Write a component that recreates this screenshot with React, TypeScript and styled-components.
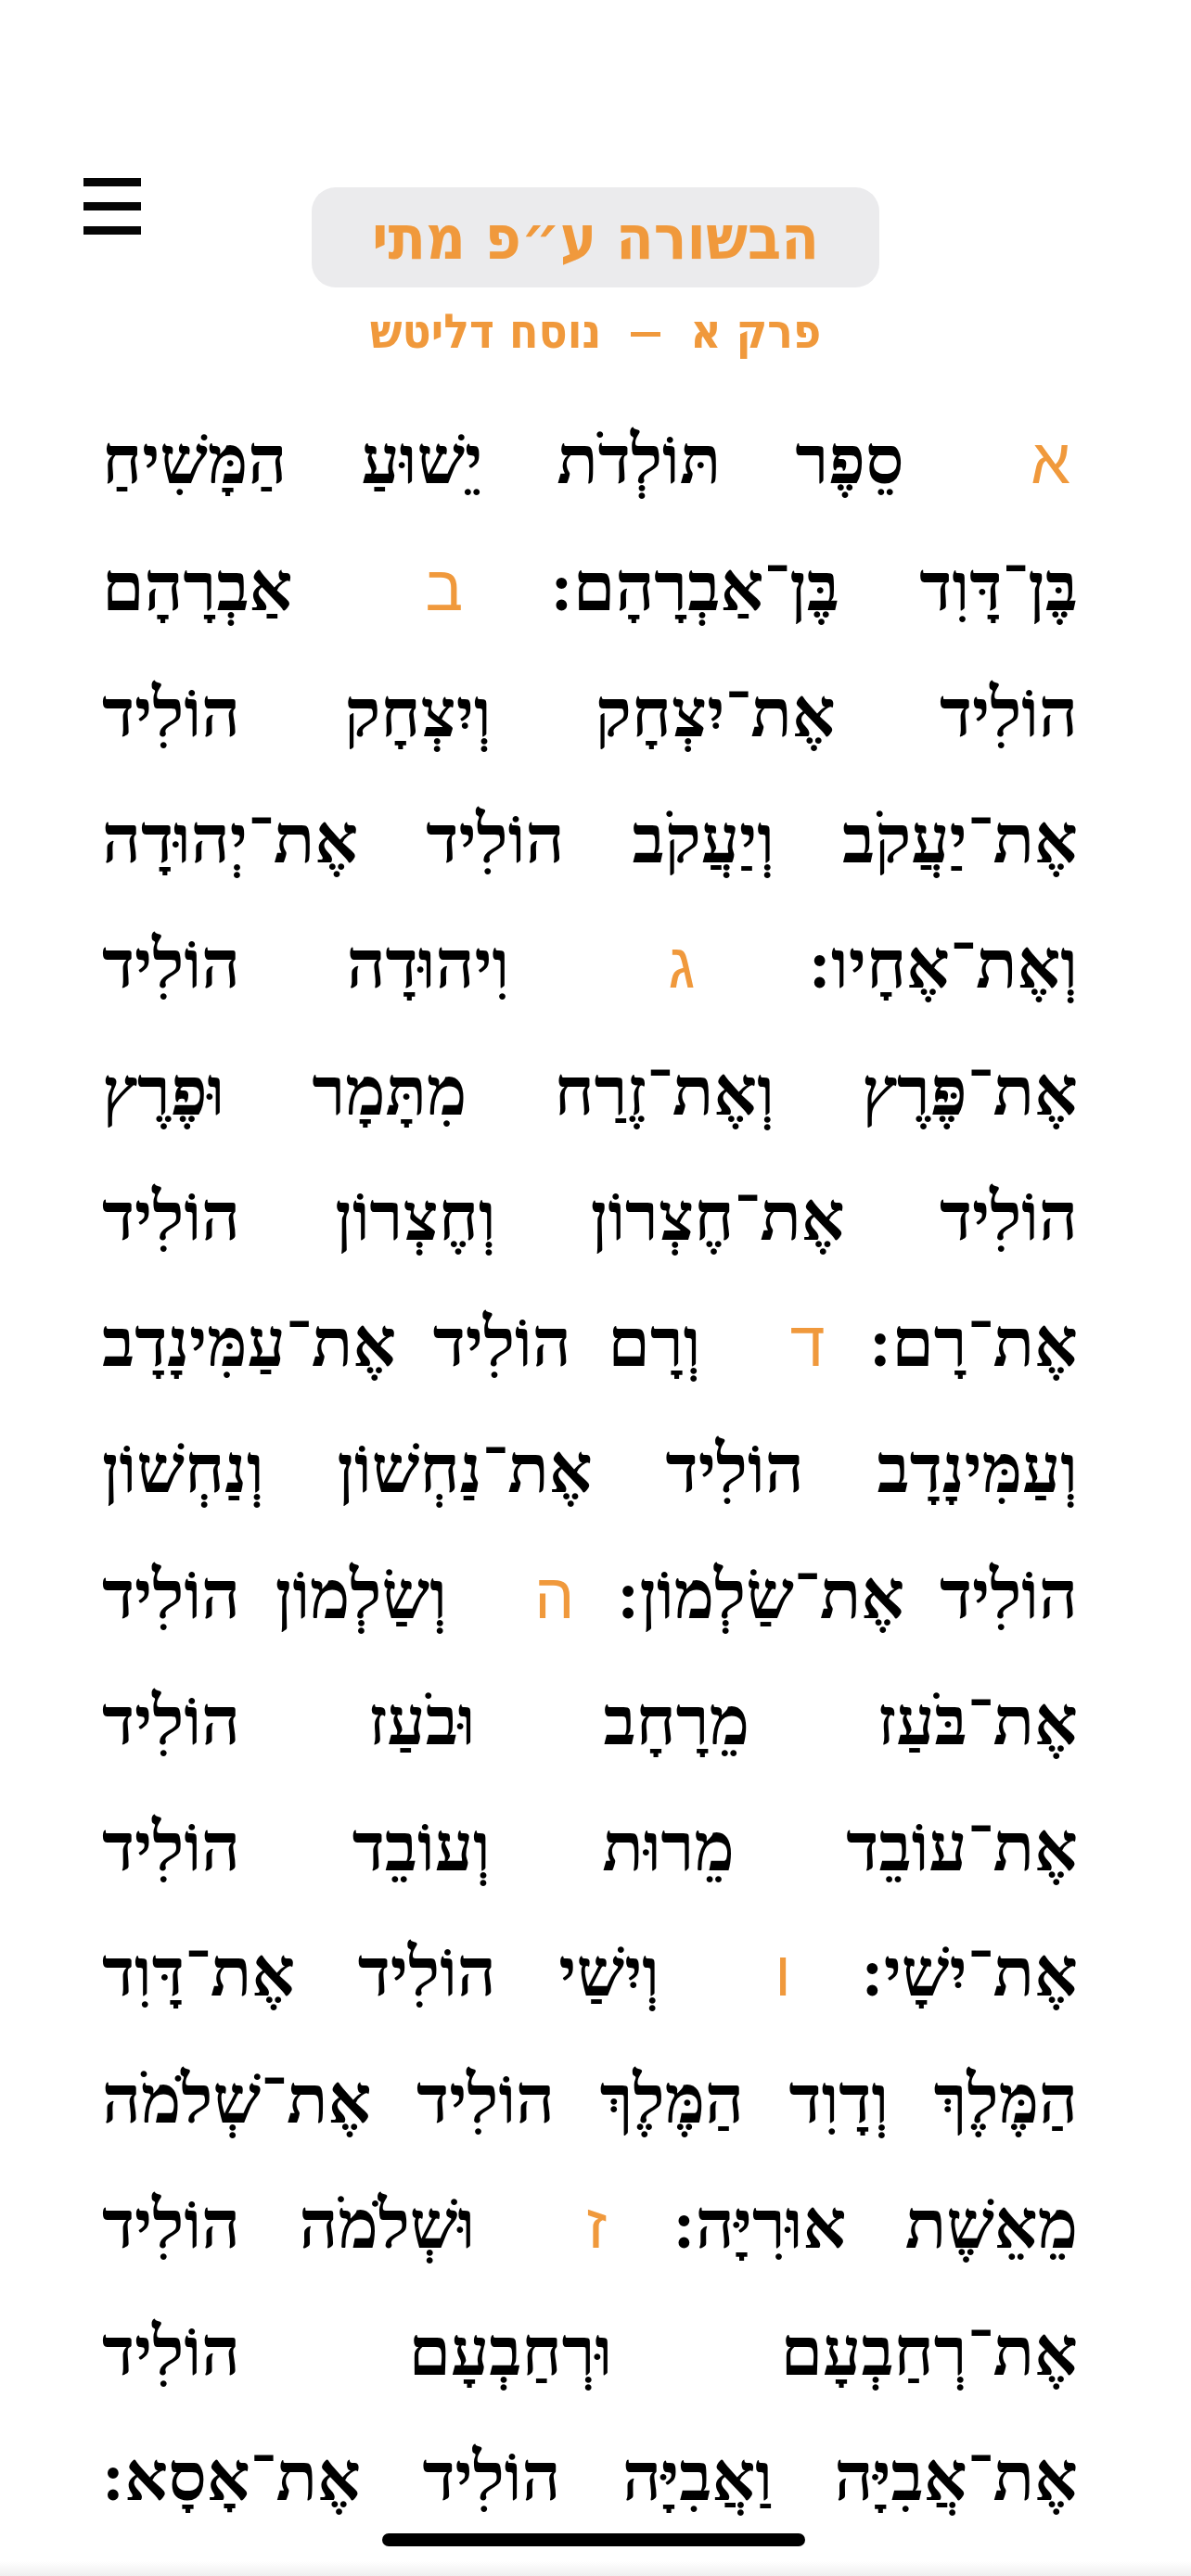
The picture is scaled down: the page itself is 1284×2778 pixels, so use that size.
import styled, { createGlobalStyle } from "styled-components";

const GlobalStyle = createGlobalStyle`
  html, body {
    margin: 0;
    padding: 0;
    background: #ffffff;
  }
  * {
    box-sizing: border-box;
  }
`;

const ORANGE = "#f0993c";

type Piece = string | { verse: string };

const lines: Piece[][] = [
  [{ verse: "א" }, "סֵפֶר תּוֹלְדֹת יֵשׁוּעַ הַמָּשִׁיחַ"],
  ["בֶּן־דָּוִד בֶּן־אַבְרָהָם:", { verse: "ב" }, "אַבְרָהָם"],
  ["הוֹלִיד אֶת־יִצְחָק וְיִצְחָק הוֹלִיד"],
  ["אֶת־יַעֲקֹב וְיַעֲקֹב הוֹלִיד אֶת־יְהוּדָה"],
  ["וְאֶת־אֶחָיו:", { verse: "ג" }, "וִיהוּדָה הוֹלִיד"],
  ["אֶת־פֶּרֶץ וְאֶת־זֶרַח מִתָּמָר וּפֶרֶץ"],
  ["הוֹלִיד אֶת־חֶצְרוֹן וְחֶצְרוֹן הוֹלִיד"],
  ["אֶת־רָם:", { verse: "ד" }, "וְרָם הוֹלִיד אֶת־עַמִּינָדָב"],
  ["וְעַמִּינָדָב הוֹלִיד אֶת־נַחְשׁוֹן וְנַחְשׁוֹן"],
  ["הוֹלִיד אֶת־שַׂלְמוֹן:", { verse: "ה" }, "וְשַׂלְמוֹן הוֹלִיד"],
  ["אֶת־בֹּעַז מֵרָחָב וּבֹעַז הוֹלִיד"],
  ["אֶת־עוֹבֵד מֵרוּת וְעוֹבֵד הוֹלִיד"],
  ["אֶת־יִשָׁי:", { verse: "ו" }, "וְיִשַׁי הוֹלִיד אֶת־דָּוִד"],
  ["הַמֶּלֶךְ וְדָוִד הַמֶּלֶךְ הוֹלִיד אֶת־שְׁלֹמֹה"],
  ["מֵאֵשֶׁת אוּרִיָּה:", { verse: "ז" }, "וּשְׁלֹמֹה הוֹלִיד"],
  ["אֶת־רְחַבְעָם וּרְחַבְעָם הוֹלִיד"],
  ["אֶת־אֲבִיָּה וַאֲבִיָּה הוֹלִיד אֶת־אָסָא:"],
];

const App = () => {
  return (
    <>
      <GlobalStyle />
      <Page>
        <Header>
          <MenuButton aria-label="menu">
            <MenuBar />
            <MenuBar />
            <MenuBar />
          </MenuButton>
          <TitleBlock>
            <TitlePill>הבשורה ע״פ מתי</TitlePill>
            <Subtitle>
              <span>פרק א</span>
              <Dash />
              <span>נוסח דליטש</span>
            </Subtitle>
          </TitleBlock>
          <div />
        </Header>

        <Chapter dir="rtl">
          {lines.map((line, i) => (
            <Line key={i}>
              {line.map((piece, j) =>
                typeof piece === "string" ? (
                  <span key={j}>{piece} </span>
                ) : (
                  <Verse key={j}>{piece.verse} </Verse>
                )
              )}
            </Line>
          ))}
        </Chapter>

        <BottomFade />
        <HomeIndicator />
      </Page>
    </>
  );
};

const Page = styled.div`
  position: relative;
  width: 1284px;
  min-height: 2778px;
  overflow: hidden;
  padding-top: 192px;
  background: #ffffff;
`;

const Header = styled.header`
  display: grid;
  grid-template-columns: 1fr auto 1fr;
  align-items: start;
`;

const MenuButton = styled.button`
  justify-self: start;
  margin-left: 90px;
  padding: 0;
  border: none;
  background: none;
  display: flex;
  flex-direction: column;
  gap: 17px;
  width: 62px;
`;

const MenuBar = styled.span`
  display: block;
  width: 62px;
  height: 9px;
  background: #050505;
`;

const TitleBlock = styled.div`
  display: flex;
  flex-direction: column;
  align-items: center;
  padding-top: 10px;
`;

const TitlePill = styled.h1`
  margin: 0;
  width: 612px;
  height: 108px;
  border-radius: 26px;
  background: #ebebed;
  color: ${ORANGE};
  display: flex;
  align-items: center;
  justify-content: center;
  font-family: "DejaVu Sans Condensed", "DejaVu Sans", sans-serif;
  font-weight: 700;
  font-size: 66px;
  direction: rtl;
`;

const Subtitle = styled.div`
  margin-top: 18px;
  direction: rtl;
  display: flex;
  align-items: center;
  gap: 32px;
  color: ${ORANGE};
  font-family: "DejaVu Sans Condensed", "DejaVu Sans", sans-serif;
  font-weight: 700;
  font-size: 51px;
  line-height: 60px;
`;

const Dash = styled.span`
  display: block;
  width: 32px;
  height: 5px;
  margin-top: 4px;
  background: ${ORANGE};
`;

const Chapter = styled.main`
  margin-top: 41px;
  padding: 0 122px 0 110px;
  font-family: "Liberation Serif", "DejaVu Serif", serif;
  font-weight: 700;
  font-size: 73px;
  line-height: 135.5px;
  color: #000000;
`;

const Line = styled.div`
  text-align: justify;
  text-align-last: justify;
  white-space: nowrap;
`;

const Verse = styled.span`
  color: ${ORANGE};
  font-family: "Liberation Sans", "DejaVu Sans", sans-serif;
  font-weight: 400;
  font-size: 68px;
  margin-left: 56px;
  margin-right: 8px;
`;

const BottomFade = styled.div`
  position: absolute;
  left: 0;
  right: 0;
  bottom: 0;
  height: 16px;
  background: linear-gradient(to bottom, rgba(240, 240, 240, 0), #efefef);
`;

const HomeIndicator = styled.div`
  position: absolute;
  left: 412px;
  bottom: 32px;
  width: 456px;
  height: 14px;
  border-radius: 7px;
  background: #000000;
`;

export default App;
